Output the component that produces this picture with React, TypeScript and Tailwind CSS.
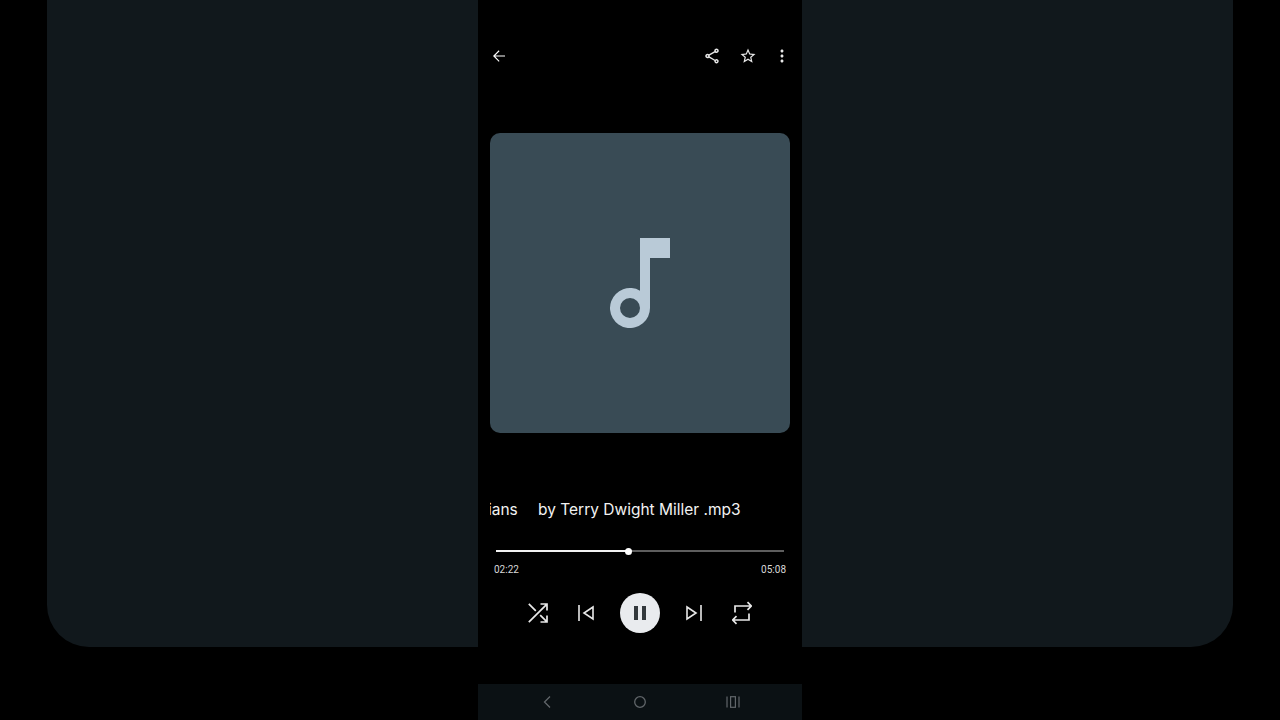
import React from "react";

type IconProps = { d: string; className?: string };

const Icon: React.FC<IconProps> = ({ d, className }) => (
  <svg viewBox="0 0 24 24" fill="currentColor" className={className}>
    <path d={d} />
  </svg>
);

const icons = {
  back: "M20 11.2H7l5.7-5.7L11.7 4.4 4 12l7.7 7.6 1-1.1L7 12.8h13v-1.6z",
  share:
    "M18 16.08c-.76 0-1.44.3-1.96.77L8.91 12.7c.05-.23.09-.46.09-.7s-.04-.47-.09-.7l7.05-4.11c.54.5 1.25.81 2.04.81 1.66 0 3-1.34 3-3s-1.34-3-3-3-3 1.34-3 3c0 .24.04.47.09.7L8.04 9.81C7.5 9.31 6.79 9 6 9c-1.66 0-3 1.34-3 3s1.34 3 3 3c.79 0 1.5-.31 2.04-.81l7.12 4.16c-.05.21-.08.43-.08.65 0 1.61 1.31 2.92 2.92 2.92s2.92-1.31 2.92-2.92-1.31-2.92-2.92-2.92zM18 4c.55 0 1 .45 1 1s-.45 1-1 1-1-.45-1-1 .45-1 1-1zM6 13c-.55 0-1-.45-1-1s.45-1 1-1 1 .45 1 1-.45 1-1 1zm12 7.02c-.55 0-1-.45-1-1s.45-1 1-1 1 .45 1 1-.45 1-1 1z",
  star: "M22 9.24l-7.19-.62L12 2 9.19 8.63 2 9.24l5.46 4.73L5.82 21 12 17.27 18.18 21l-1.63-7.03L22 9.24zM12 15.4l-3.76 2.27 1-4.28-3.32-2.88 4.38-.38L12 6.1l1.71 4.04 4.38.38-3.32 2.88 1 4.28L12 15.4z",
  more: "M12 7.8c1 0 1.8-.8 1.8-1.8s-.8-1.8-1.8-1.8-1.8.8-1.8 1.8.8 1.8 1.8 1.8zm0 2.4c-1 0-1.8.8-1.8 1.8s.8 1.8 1.8 1.8 1.8-.8 1.8-1.8-.8-1.8-1.8-1.8zm0 6c-1 0-1.8.8-1.8 1.8s.8 1.8 1.8 1.8 1.8-.8 1.8-1.8-.8-1.8-1.8-1.8z",
  pause: "M6 19h4V5H6v14zm8-14v14h4V5h-4z",
};

const NoteIcon = () => (
  <svg viewBox="0 0 60 90" className="h-[90px] w-[60px]" fill="#b9cad7">
    <path
      fillRule="evenodd"
      d="M30 0h30v20H40v50a20 20 0 1 1-10-17.3zM20 60a10 10 0 1 0 0 20 10 10 0 0 0 0-20z"
    />
  </svg>
);

const ShuffleIcon = () => (
  <svg viewBox="0 0 20 20" className="h-5 w-5" fill="none" stroke="#e8e8e8" strokeWidth="1.7">
    <path d="M.8.8l7 7M12.2 12.2l7 7M.8 19.2 19.2.8M12.5 1h6.5v6.5M12.5 19H19v-6.5" />
  </svg>
);

const PrevIcon = () => (
  <svg viewBox="0 0 16 16" className="h-4 w-4" fill="none" stroke="#e8e8e8" strokeWidth="1.6">
    <path d="M1 0v16M15 2 6 8l9 6z" />
  </svg>
);

const NextIcon = () => (
  <svg viewBox="0 0 16 16" className="h-4 w-4" fill="none" stroke="#e8e8e8" strokeWidth="1.6">
    <path d="M15 0v16M1 2l9 6-9 6z" />
  </svg>
);

const RepeatIcon = () => (
  <svg viewBox="0 0 20 24" className="h-6 w-5" fill="none" stroke="#e8e8e8" strokeWidth="1.7">
    <path d="M19 5H3v6.5M15.5 1.2 19.3 5l-3.8 3.8M1 19h16v-6.5M4.5 15.2.7 19l3.8 3.8" />
  </svg>
);

const NavBar = () => (
  <div className="flex h-9 w-full items-center justify-center gap-[79px] bg-[#0b1114] text-[#61666a]">
    <svg viewBox="0 0 14 14" className="h-3.5 w-3.5" fill="none" stroke="currentColor" strokeWidth="1.3">
      <path d="M10 1.5 4.5 7l5.5 5.5" />
    </svg>
    <svg viewBox="0 0 14 14" className="h-3.5 w-3.5" fill="none" stroke="currentColor" strokeWidth="1.3">
      <circle cx="7" cy="7" r="5.3" />
    </svg>
    <svg viewBox="0 0 14 14" className="h-3.5 w-3.5" fill="none" stroke="currentColor" strokeWidth="1.2">
      <path d="M1 1.5v11M13 1.5v11" />
      <rect x="4.6" y="1.7" width="4.8" height="10.6" />
    </svg>
  </div>
);

const App: React.FC = () => {
  return (
    <div className="relative h-[720px] w-[1280px] overflow-hidden bg-black font-['Inter',sans-serif]">
      {/* blurred page behind the phone */}
      <div className="mx-[47px] h-[647px] rounded-b-[42px] bg-[#11181c]" />

      <div className="absolute inset-y-0 left-[478px] flex w-[324px] flex-col bg-black text-white">
        <div className="mt-[44.5px] flex h-[22px] items-center justify-between pr-[10px] pl-3">
          <Icon d={icons.back} className="h-[18px] w-[18px]" />
          <div className="flex items-center">
            <Icon d={icons.share} className="h-[18px] w-[18px] text-[#e8e8e8]" />
            <Icon d={icons.star} className="ml-[18px] h-[18px] w-[18px] text-[#e8e8e8]" />
            <Icon d={icons.more} className="ml-[15px] h-5 w-5 text-[#e8e8e8]" />
          </div>
        </div>

        <div className="mx-3 mt-[66.5px] flex h-[300px] w-[300px] items-center justify-center rounded-[10px] bg-[#394b55]">
          <NoteIcon />
        </div>

        <div className="mx-3 mt-[66px] flex h-[22px] items-center overflow-hidden text-[15.5px] leading-[22px] whitespace-nowrap text-[#f2f2f2]">
          <span className="ml-[-2px] w-[50px] shrink-0">ians</span>
          <span>by Terry Dwight Miller .mp3</span>
        </div>

        <div className="relative mx-[18px] mt-[29px] h-0.5 bg-[#5e5e5e]">
          <div className="h-full w-[132px] bg-[#f2f2f2]" />
          <div className="absolute top-[-2.5px] left-[129px] h-[7px] w-[7px] rounded-full bg-white" />
        </div>

        <div className="mt-[12px] flex h-3 items-center justify-between px-4 font-['Roboto',sans-serif] text-[10px] leading-3 text-[#d8d8d8]">
          <span>02:22</span>
          <span>05:08</span>
        </div>

        <div className="mt-[17px] flex h-10 items-center justify-center">
          <ShuffleIcon />
          <div className="ml-[30px]">
            <PrevIcon />
          </div>
          <div className="ml-[26px] flex h-10 w-10 items-center justify-center rounded-full bg-[#e9ebee] text-[#33383c]">
            <Icon d={icons.pause} className="h-6 w-6" />
          </div>
          <div className="ml-[26px]">
            <NextIcon />
          </div>
          <div className="ml-[30px]">
            <RepeatIcon />
          </div>
        </div>

        <div className="mt-auto">
          <NavBar />
        </div>
      </div>
    </div>
  );
};

export default App;
